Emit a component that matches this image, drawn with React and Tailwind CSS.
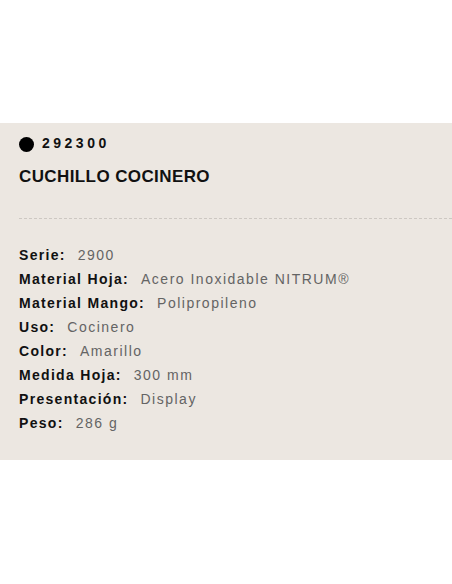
import React from 'react';

const specs = [
  ['Serie', '2900'],
  ['Material Hoja', 'Acero Inoxidable NITRUM®'],
  ['Material Mango', 'Polipropileno'],
  ['Uso', 'Cocinero'],
  ['Color', 'Amarillo'],
  ['Medida Hoja', '300 mm'],
  ['Presentación', 'Display'],
  ['Peso', '286 g'],
];

export default function App() {
  return (
    <div className="w-[452px] h-[584px] bg-white pt-[123px] font-['Liberation_Sans',Arial,sans-serif]">
      <div className="bg-[#ece7e1] pl-[19px] pt-[10px] pb-[25px]">
        <div className="flex items-start h-5 gap-[8px]">
          <span className="mt-[4px] w-[15px] h-[15px] rounded-full bg-black shrink-0" />
          <span className="text-[14px] leading-5 font-bold tracking-[3.5px] text-[#111]">292300</span>
        </div>
        <h1 className="mt-[12px] text-[17px] leading-6 font-bold tracking-[0.4px] text-[#111]">
          CUCHILLO COCINERO
        </h1>
        <div className="mt-[29px] border-t border-dashed border-[#cdc8c2]" />
        <div className="mt-[24px] flex flex-col">
          {specs.map(([label, value]) => (
            <div key={label} className="flex gap-[12px] text-[14px] leading-6">
              <span className="font-bold tracking-[1.3px] text-[#111]">{label}:</span>
              <span className="tracking-[1.5px] text-[#646464]">{value}</span>
            </div>
          ))}
        </div>
      </div>
    </div>
  );
}
